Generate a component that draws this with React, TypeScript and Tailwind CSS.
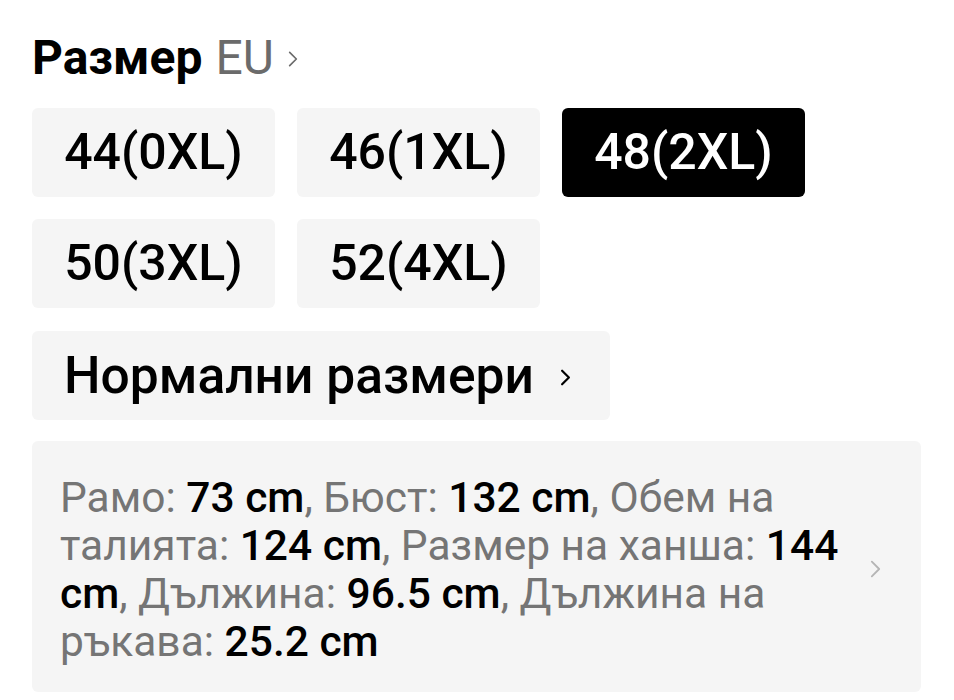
import React from "react";

const sizes = [
  { label: "44(0XL)", selected: false },
  { label: "46(1XL)", selected: false },
  { label: "48(2XL)", selected: true },
  { label: "50(3XL)", selected: false },
  { label: "52(4XL)", selected: false },
];

function Chevron({ className, sw = 2 }: { className?: string; sw?: number }) {
  return (
    <svg viewBox="0 0 12 20" className={className} fill="none" stroke="currentColor" strokeWidth={sw} strokeLinecap="round" strokeLinejoin="round">
      <path d="M2 2 L10 10 L2 18" />
    </svg>
  );
}

export default function App() {
  return (
    <div className="w-[954px] h-[700px] bg-white overflow-hidden pl-[32px] pt-[28px]" style={{ fontFamily: "Roboto, 'Noto Sans', sans-serif" }}>
      <div className="flex items-center h-[60px]">
        <span className="text-[48px] font-bold text-black leading-none">Размер</span>
        <span className="text-[48px] text-[#6b6b6b] leading-none ml-[13px]">EU</span>
        <Chevron className="w-[10px] h-[18px] text-[#6b6b6b] ml-[14px] mt-[2px]" />
      </div>
      <div className="grid grid-cols-[243px_243px_243px] gap-[22px] mt-[20px]">
        {sizes.map((s) => (
          <div
            key={s.label}
            className={`h-[89px] rounded-[6px] flex items-center justify-center text-[50px] font-medium ${s.selected ? "bg-black text-white" : "bg-[#f5f5f5] text-black"}`}
          >
            {s.label}
          </div>
        ))}
      </div>
      <div className="mt-[23px] w-[578px] h-[89px] rounded-[6px] bg-[#f5f5f5] flex items-center pl-[32px]">
        <span className="text-[51.5px] font-medium text-black">Нормални размери</span>
        <Chevron className="w-[11px] h-[17px] text-black ml-[26px] mt-[4px]" sw={2.6} />
      </div>
      <div className="mt-[21px] w-[889px] h-[251px] rounded-[6px] bg-[#f5f5f5] flex items-center pl-[28px] pr-[40px]">
        <p className="w-[790px] text-[42.5px] leading-[48px] text-[#757575] mt-[6px]">
          Рамо: <b className="font-medium text-black">73 cm</b>, Бюст: <b className="font-medium text-black">132 cm</b>, Обем на талията: <b className="font-medium text-black">124 cm</b>, Размер на ханша: <b className="font-medium text-black">144 cm</b>, Дължина: <b className="font-medium text-black">96.5 cm</b>, Дължина на ръкава: <b className="font-medium text-black">25.2 cm</b>
        </p>
        <Chevron className="w-[11px] h-[20px] text-[#b5b5b5] ml-auto mt-[4px]" />
      </div>
    </div>
  );
}
